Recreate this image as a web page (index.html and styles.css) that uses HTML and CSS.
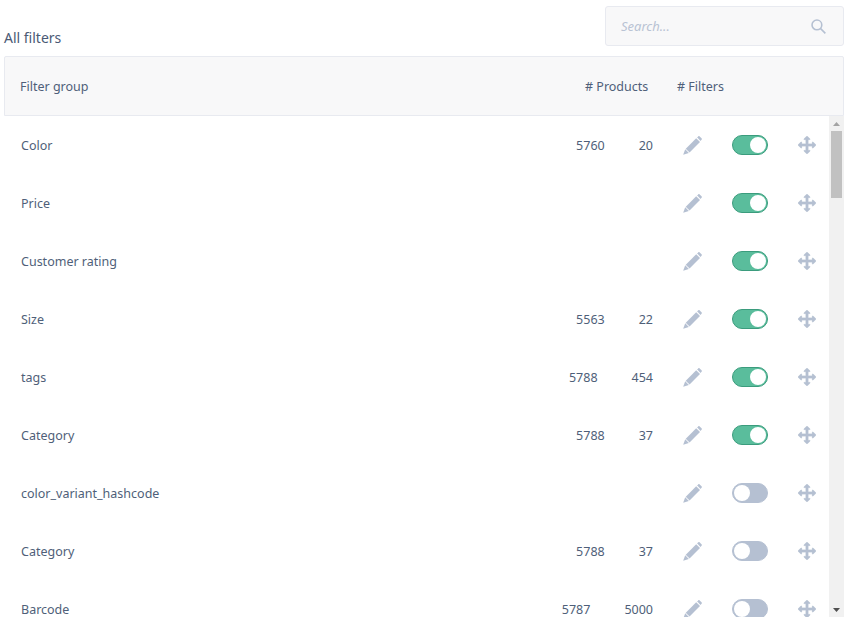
FILE: index.html
```html
<!DOCTYPE html>
<html lang="en">
<head>
<meta charset="utf-8">
<title>All filters</title>
<link rel="stylesheet" href="styles.css">
</head>
<body>
<svg class="defs" width="0" height="0" aria-hidden="true">
  <symbol id="i-pencil" viewBox="0 0 20 20">
    <path d="M14.8 1.400 16.200.2c.4-.3.9-.3 1.200 0l2.300 2.300c.3.300.3.800 0 1.200l-1.300 1.500z"/>
    <path d="M13.900 2.300 17.900 6.300 6.900 17.300 2.900 13.300z"/>
    <path d="M2.300 14 6.200 17.900.2 19.800z"/>
  </symbol>
  <symbol id="i-move" viewBox="0 0 1792 1792">
    <path d="M1792 896q0 26-19 45l-256 256q-19 19-45 19t-45-19-19-45v-128h-384v384h128q26 0 45 19t19 45-19 45l-256 256q-19 19-45 19t-45-19l-256-256q-19-19-19-45t19-45 45-19h128v-384h-384v128q0 26-19 45t-45 19-45-19l-256-256q-19-19-19-45t19-45l256-256q19-19 45-19t45 19 19 45v128h384v-384h-128q-26 0-45-19t-19-45 19-45l256-256q19-19 45-19t45 19l256 256q19 19 19 45t-19 45-45 19h-128v384h384v-128q0-26 19-45t45-19 45 19l256 256q19 19 19 45z"/>
  </symbol>
</svg>
<main class="page">
  <div class="top">
    <h1 class="title">All filters</h1>
    <div class="search">
      <span class="search-text">Search...</span>
      <svg class="search-icon" viewBox="0 0 16 16" aria-hidden="true"><circle cx="6.300" cy="6.300" r="5.200"/><path d="M10 10l5.300 5.300"/></svg>
    </div>
  </div>
  <div class="head">
    <span class="head-name">Filter group</span>
    <span class="head-products"># Products</span>
    <span class="head-filters"># Filters</span>
  </div>
  <div class="body">
    <div class="list">
      <div class="row"><span class="name">Color</span><span class="nums"><span>5760</span><span>20</span></span><svg class="pencil"><use href="#i-pencil"/></svg><span class="toggle on"></span><svg class="move"><use href="#i-move"/></svg></div>
      <div class="row"><span class="name">Price</span><span class="nums"></span><svg class="pencil"><use href="#i-pencil"/></svg><span class="toggle on"></span><svg class="move"><use href="#i-move"/></svg></div>
      <div class="row"><span class="name">Customer rating</span><span class="nums"></span><svg class="pencil"><use href="#i-pencil"/></svg><span class="toggle on"></span><svg class="move"><use href="#i-move"/></svg></div>
      <div class="row"><span class="name">Size</span><span class="nums"><span>5563</span><span>22</span></span><svg class="pencil"><use href="#i-pencil"/></svg><span class="toggle on"></span><svg class="move"><use href="#i-move"/></svg></div>
      <div class="row"><span class="name">tags</span><span class="nums"><span>5788</span><span>454</span></span><svg class="pencil"><use href="#i-pencil"/></svg><span class="toggle on"></span><svg class="move"><use href="#i-move"/></svg></div>
      <div class="row"><span class="name">Category</span><span class="nums"><span>5788</span><span>37</span></span><svg class="pencil"><use href="#i-pencil"/></svg><span class="toggle on"></span><svg class="move"><use href="#i-move"/></svg></div>
      <div class="row"><span class="name">color_variant_hashcode</span><span class="nums"></span><svg class="pencil"><use href="#i-pencil"/></svg><span class="toggle"></span><svg class="move"><use href="#i-move"/></svg></div>
      <div class="row"><span class="name">Category</span><span class="nums"><span>5788</span><span>37</span></span><svg class="pencil"><use href="#i-pencil"/></svg><span class="toggle"></span><svg class="move"><use href="#i-move"/></svg></div>
      <div class="row"><span class="name">Barcode</span><span class="nums"><span>5787</span><span>5000</span></span><svg class="pencil"><use href="#i-pencil"/></svg><span class="toggle"></span><svg class="move"><use href="#i-move"/></svg></div>
    </div>
    <div class="scrollbar" aria-hidden="true">
      <div class="arrow"><svg class="arrow-up" viewBox="0 0 7 4"><path d="M3.500 0 7 4H0z"/></svg></div>
      <div class="thumb"></div>
      <div class="track"></div>
      <div class="arrow"><svg class="arrow-down" viewBox="0 0 7 4"><path d="M0 0H7L3.500 4z"/></svg></div>
    </div>
  </div>
</main>
</body>
</html>
```
FILE: styles.css
```css
html, body { margin: 0; padding: 0; height: 100%; overflow: hidden; background: #fff; }
body { font-family: "Noto Sans", "Lato", sans-serif; font-size: 12.500px; color: #4f5f79; }
.defs { position: absolute; }
.page { display: flex; flex-direction: column; height: 617px; padding: 6px 6px 0 4px; box-sizing: border-box; }
.top { display: flex; justify-content: space-between; align-items: flex-end; height: 40px; margin-bottom: 10px; }
.title { margin: 0 0 -1px; font-size: 14px; font-weight: 400; line-height: 18px; color: #4a5a75; }
.search { width: 239px; height: 40px; box-sizing: border-box; display: flex; align-items: center; justify-content: space-between; padding: 0 17px 0 15px; background: #f8f8f9; border: 1px solid #e8eaf0; border-radius: 3px; }
.search-text { font-size: 13px; font-style: italic; color: #b9c3d4; }
.search-icon { width: 15px; height: 15px; fill: none; stroke: #b5c0d2; stroke-width: 1.700; }
.head { display: flex; align-items: center; height: 60px; box-sizing: border-box; background: #f8f8f9; border: 1px solid #e8eaf0; border-radius: 2px 2px 0 0; padding-left: 15px; }
.head-name { flex: 1; }
.head-products { width: 92px; }
.head-filters { width: 166px; }
.body { flex: 1; min-height: 0; display: flex; }
.list { flex: 1; min-width: 0; overflow: hidden; }
.row { display: flex; align-items: center; height: 58px; padding-left: 17px; }
.name { flex: 1; }
.nums { display: flex; gap: 34px; margin-right: 30px; }
.pencil { width: 19px; height: 19px; fill: #b5c0d2; margin-right: 30px; }
.move { width: 18px; height: 18px; fill: #b5c0d2; stroke: #b5c0d2; stroke-width: 20; margin-left: 30px; margin-right: 13px; overflow: visible; }
.toggle { width: 36px; height: 20px; box-sizing: border-box; border-radius: 10px; border: 1px solid #b5c0d2; background: #b5c0d2; display: flex; align-items: center; justify-content: flex-start; padding: 0 1px; }
.toggle::after { content: ""; width: 16px; height: 16px; border-radius: 50%; background: #fff; }
.toggle.on { background: #5abd9c; border-color: #3b9c7d; justify-content: flex-end; }
.scrollbar { width: 15px; display: flex; flex-direction: column; background: #f1f1f1; }
.arrow { height: 15px; display: flex; align-items: center; justify-content: center; }
.arrow svg { width: 7px; height: 4px; }
.arrow-up { fill: #a3a3a3; }
.arrow-down { fill: #505050; }
.thumb { height: 67px; margin: 0 2px; background: #c1c1c1; }
.track { flex: 1; }
```
